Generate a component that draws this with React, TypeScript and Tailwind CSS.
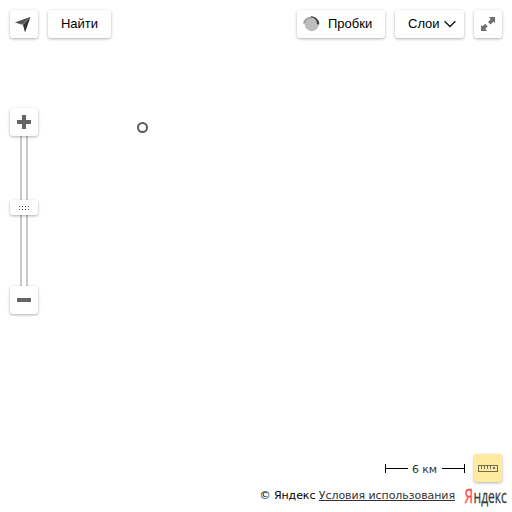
import type { ReactNode } from 'react';

function Button({ className, label, children }: { className: string; label?: string; children: ReactNode }) {
  return (
    <button
      aria-label={label}
      className={`flex shrink-0 items-center rounded-[3px] shadow-[0_1px_3px_rgba(0,0,0,0.32)] ${className}`}
    >
      {children}
    </button>
  );
}

function Toolbar() {
  return (
    <header className="flex h-7 font-['Liberation_Sans',Arial,sans-serif] text-[13px] leading-7 text-black">
      <Button label="Моё местоположение" className="w-7 bg-white">
        <svg width="28" height="28">
          <path d="M20.5 7 5 12.5 13 15Z" fill="#777" />
          <path d="M20.5 7 13 15 15 22.5Z" fill="#333" />
          <path d="M20.5 7 5 12.5l7 1.5Z" fill="#555" />
        </svg>
      </Button>
      <Button className="ml-2.5 w-[63px] justify-center bg-white">Найти</Button>
      <Button className="ml-auto w-[88px] bg-white pl-1.5">
        <svg width="17" height="16" className="mr-2">
          <circle cx="8.7" cy="8.1" r="7.1" fill="#bdbdbd" />
          <path d="M0 7.5A8 8 0 0 1 8 .8L8.5 2A7 7 0 0 0 2 7.5Z" fill="#999" />
          <path d="M8 .8A7.5 7.5 0 0 1 16 8.2L14.5 8A8 8 0 0 0 8 .8Z" fill="#333" stroke="#333" strokeWidth=".7" />
        </svg>
        Пробки
      </Button>
      <Button className="ml-2.5 w-[69px] bg-white pl-[13px]">
        Слои
        <svg width="12" height="8" className="ml-1">
          <path d="m.6 1.2 5.4 5.3 5.4-5.3" fill="none" stroke="#111" strokeWidth="1.3" />
        </svg>
      </Button>
      <Button label="На весь экран" className="ml-2.5 w-7 bg-white">
        <svg width="28" height="28" fill="#707070">
          <path d="M15 7h6v6l-1.7-1.2-2.8 2.7-2.5-2.5 2.7-2.8Z" />
          <path d="M13 21H7v-6l1.7 1.2 2.5-2.5 2.5 2.5-2.4 2.6Z" />
        </svg>
      </Button>
    </header>
  );
}

function Rail({ className }: { className: string }) {
  return <div className={`w-2 border-x-2 border-[#c9c9c9] bg-white ${className}`} />;
}

function ZoomControl() {
  return (
    <div className="mt-[70px] flex w-7 flex-col items-center">
      <Button label="Увеличить" className="z-10 h-7 w-7 bg-white">
        <svg width="28" height="28" fill="#666" shapeRendering="crispEdges">
          <path d="M7 12h14v4H7Z" />
          <path d="M12 7h4v14h-4Z" />
        </svg>
      </Button>
      <Rail className="h-16" />
      <Button label="Масштаб" className="z-10 h-[15px] w-7 bg-white">
        <svg width="28" height="15" fill="#555" shapeRendering="crispEdges">
          {[9, 12, 15, 18].map((x) => (
            <g key={x}>
              <rect x={x} y="6" width="1" height="1" />
              <rect x={x} y="9" width="1" height="1" />
            </g>
          ))}
        </svg>
      </Button>
      <Rail className="h-[71px]" />
      <Button label="Уменьшить" className="z-10 h-7 w-7 bg-white">
        <svg width="28" height="28" fill="#666" shapeRendering="crispEdges">
          <path d="M7 12h14v4H7Z" />
        </svg>
      </Button>
    </div>
  );
}

function ScaleLine({ flip }: { flip?: boolean }) {
  return (
    <svg width="23" height="11" className={flip ? '-scale-x-100' : ''} shapeRendering="crispEdges">
      <path d="M0 1h1v9H0ZM0 5h23v1H0Z" fill="#000" />
    </svg>
  );
}

function Footer() {
  return (
    <footer className="mt-auto font-['DejaVu_Sans',Verdana,sans-serif] text-[11px] tracking-[-0.07px] text-[#333]">
      <div className="flex h-7 items-center justify-end">
        <ScaleLine />
        <span className="mt-1 w-[34px] pr-px text-center leading-[14px]">6 км</span>
        <ScaleLine flip />
        <Button label="Линейка" className="ml-[9px] h-7 w-7 bg-[#ffeba0]">
          <svg width="28" height="28" shapeRendering="crispEdges">
            <path d="M4 11h20v7H4ZM5 12v5h18v-5Z" fill="#746d56" fillRule="evenodd" />
            <path d="M7 12h1v3H7ZM10 12h1v3h-1ZM13 12h1v3h-1ZM16 12h1v3h-1ZM19 13h2v2h-2Z" fill="#746d56" />
          </svg>
        </Button>
      </div>
      <div className="-mr-[6px] flex h-[30px] justify-end">
        <div className="mt-[7px] whitespace-nowrap leading-[14px]">
          <span className="text-black">© Яндекс </span>
          <a className="underline">Условия использования</a>
        </div>
        <svg width="45" height="29" className="ml-2 overflow-visible tracking-normal" fontFamily="'Open Sans', sans-serif">
          <text x="1.4" y="20.8" fontSize="19.5" fill="#ff4d4d" stroke="#ff4d4d" strokeWidth=".4" textLength="8.6" lengthAdjust="spacingAndGlyphs">Я</text>
          <text x="10.5" y="20.8" fontSize="18" fill="#3a3a3a" stroke="#3a3a3a" strokeWidth=".3" textLength="33.4" lengthAdjust="spacingAndGlyphs">ндекс</text>
        </svg>
      </div>
    </footer>
  );
}

export default function App() {
  return (
    <main className="relative flex h-[512px] w-[512px] flex-col overflow-hidden bg-white px-2.5 pt-2.5">
      <Toolbar />
      <ZoomControl />
      {/* Map pin */}
      <div className="absolute left-[137px] top-[122px] h-[11px] w-[11px] rounded-full border-2 border-[#5c5c5c] bg-white" />
      <Footer />
    </main>
  );
}
